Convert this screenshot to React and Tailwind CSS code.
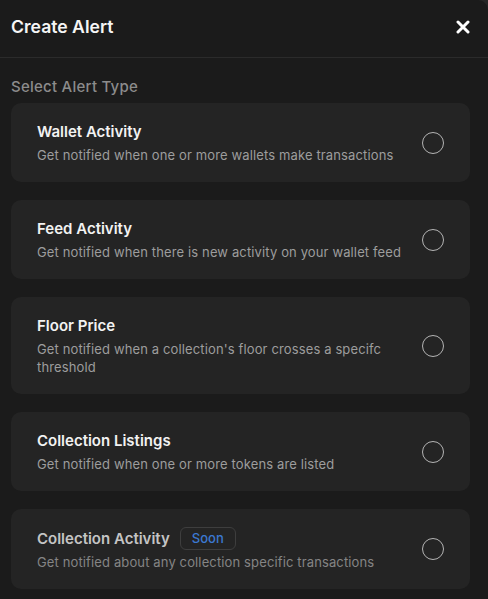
const alertTypes = [
  { title: 'Wallet Activity', desc: 'Get notified when one or more wallets make transactions' },
  { title: 'Feed Activity', desc: 'Get notified when there is new activity on your wallet feed' },
  { title: 'Floor Price', desc: "Get notified when a collection's floor crosses a specifc threshold" },
  { title: 'Collection Listings', desc: 'Get notified when one or more tokens are listed' },
  { title: 'Collection Activity', desc: 'Get notified about any collection specific transactions', soon: true },
]

function AlertOption({ title, desc, soon }) {
  return (
    <div className="flex items-center rounded-[10px] bg-[#242424] pl-[26px] pr-[26px] py-[18px]">
      <div className="flex-1 pr-[12px]">
        <div className="flex items-center gap-[10px]">
          <h3 className={`text-[15px] leading-[22px] font-semibold ${soon ? 'text-[#c4c4c4]' : 'text-[#f2f2f2]'}`}>
            {title}
          </h3>
          {soon && (
            <span className="rounded-[6px] border border-[#3e3e3e] px-[11px] text-[13px] leading-[21px] font-medium text-[#3b78d0]">
              Soon
            </span>
          )}
        </div>
        <p className={`mt-[3px] text-[13px] leading-[18px] tracking-[0.13px] ${soon ? 'text-[#858585]' : 'text-[#9d9d9d]'}`}>
          {desc}
        </p>
      </div>
      <span className="h-[22px] w-[22px] shrink-0 rounded-full border border-[#b4b4b4]" />
    </div>
  )
}

export default function App() {
  return (
    <div className="min-h-[599px] bg-[#262626] font-['Inter','Liberation_Sans',sans-serif]">
      <div className="min-h-[599px] rounded-tr-[10px] bg-[#1b1b1b]">
        <header className="flex h-[58px] items-center justify-between border-b border-[#2b2b2b] pl-[11px] pr-[18px] pb-[3px]">
          <h2 className="text-[17.6px] font-semibold text-[#f5f5f5]">Create Alert</h2>
          <button className="text-white">
            <svg width="14" height="14" viewBox="0 0 14 14" fill="none" stroke="currentColor" strokeWidth="3" strokeLinecap="round">
              <path d="M2 2l10 10M12 2L2 12" />
            </svg>
          </button>
        </header>
        <div className="pl-[11px] pr-[18px] pt-[19px] pb-[10px]">
          <p className="mb-[6px] text-[15px] leading-[20px] font-medium tracking-[0.25px] text-[#8c8c8c]">Select Alert Type</p>
          <div className="flex flex-col gap-[18px]">
            {alertTypes.map(a => (
              <AlertOption key={a.title} {...a} />
            ))}
          </div>
        </div>
      </div>
    </div>
  )
}
